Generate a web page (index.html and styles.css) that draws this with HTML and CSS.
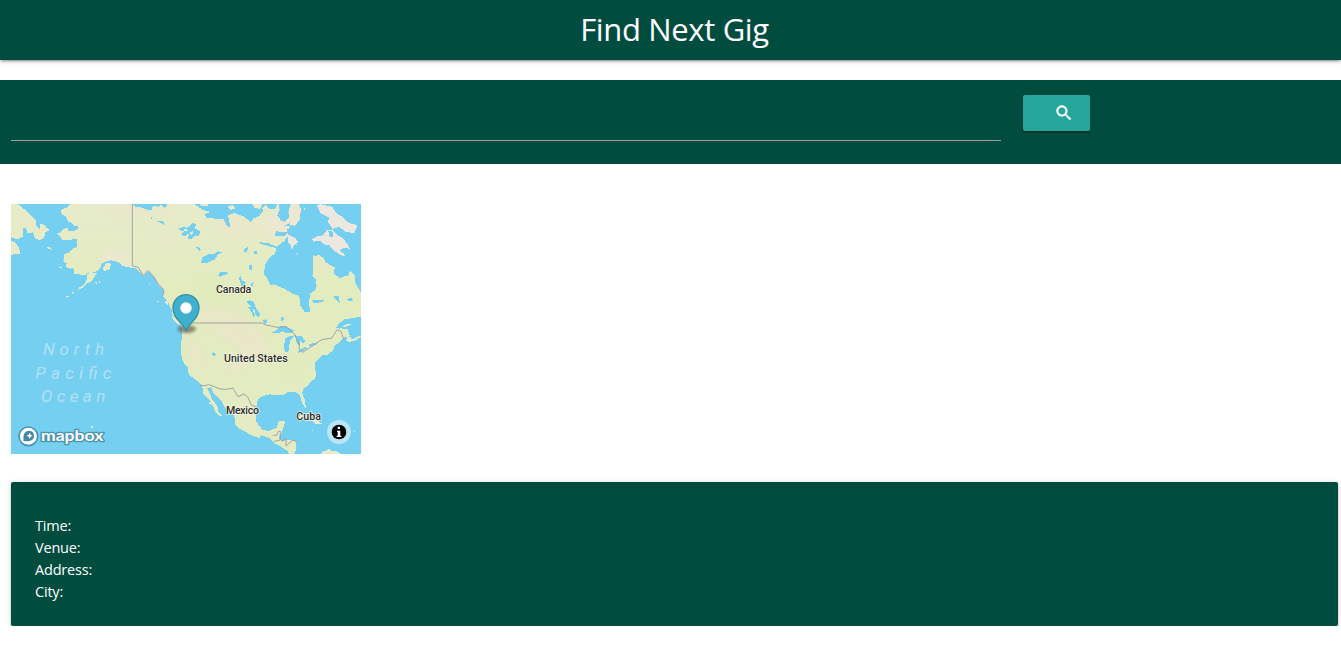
FILE: index.html
```html
<!DOCTYPE html>
<html lang="en">
<head>
<meta charset="utf-8">
<title>Find Next Gig</title>
<link rel="stylesheet" href="styles.css">
</head>
<body>
<header class="navbar"><h1 class="brand">Find Next Gig</h1></header>
<form class="search">
  <input class="search-input" type="text" aria-label="Search">
  <button class="search-button" type="button" aria-label="Find">
    <svg class="search-icon" viewBox="0 0 24 24"><path fill="currentColor" stroke="currentColor" stroke-width=".5" d="M15.5 14h-.79l-.28-.27C15.41 12.59 16 11.11 16 9.500 16 5.910 13.090 3 9.500 3S3 5.910 3 9.500 5.910 16 9.500 16c1.610 0 3.090-.59 4.230-1.570l.27.28v.79l5 4.990L20.490 19l-4.990-5zm-6 0C7.010 14 5 11.990 5 9.500S7.010 5 9.500 5 14 7.010 14 9.500 11.990 14 9.500 14z"/></svg>
  </button>
</form>
<main class="content">
  <svg class="map" viewBox="0 0 1050 750" role="img" aria-label="Map of North America">
    <defs>
      <filter id="soft" x="-40%" y="-40%" width="180%" height="180%"><feGaussianBlur stdDeviation="12"/></filter>
      <filter id="shade" x="-40%" y="-60%" width="180%" height="220%"><feGaussianBlur stdDeviation="5"/></filter>
      <linearGradient id="landFill" x1="0" y1="0" x2="0" y2="1"><stop offset="0" stop-color="#e7ebca"/><stop offset=".35" stop-color="#e3ecbf"/><stop offset="1" stop-color="#e4ebc3"/></linearGradient>
      <clipPath id="landClip"><path id="mainland" d="M180 0L168 10 150 18 152 30 165 38 171 53 181 56 190 66 203 66 198 78 188 81 171 80 169 70 157 76 147 86 138 89 147 96 153 107 180 108 188 103 197 106 197 130 183 135 173 146 160 151 157 172 166 177 178 190 188 195 190 210 222 213 229 208 250 205 265 197 272 180 280 174 300 169 325 175 335 186 360 191 376 193 383 203 396 216 408 205 417 204 430 218 440 240 456 255 459 265 455 276 470 290 475 305 484 320 484 334 502 348 512 370 512 404 510 425 512 464 520 480 530 490 533 510 550 525 564 534 574 550 577 568 590 583 600 592 592 598 605 604 612 622 623 635 633 636 622 622 619 606 602 584 598 570 588 553 600 550 607 565 622 583 634 595 642 612 662 625 671 640 672 662 683 674 705 684 723 695 745 702 751 694 776 702 790 718 804 724 829 741 835 750H849L856 737 853 708 832 707 814 712 802 703 812 687 823 652 803 652 796 672 773 681 754 677 735 652 735 612 741 586 754 576 777 571 790 574 819 572 832 563 850 564 862 569 869 579 872 595 884 614 883 592 874 570 875 556 891 545 896 535 911 524 917 510 912 495 911 475 927 462 934 453 947 454 966 439 970 425 987 414 1000 400 1017 397 1010 375 974 372 985 358 1001 346 1050 338V265L1034 240 1031 214 1018 199 1011 215 997 218 991 224 976 215 969 210 971 190 945 176 939 164 925 152 910 157 905 152 907 188 904 217 913 222 917 245 911 260 896 270 895 305 898 325 882 325 868 305 865 276 843 268 825 257 808 249 788 241 778 243 768 221 760 211 761 184 773 164 793 147 797 128 821 110 833 93 827 76 849 68 866 47 871 17 862 0Z"/></clipPath>
    </defs>
    <rect width="1050" height="750" fill="#75cff0"/>
    <g shape-rendering="crispEdges">
      <use href="#mainland" fill="url(#landFill)"/>
      <path fill="#e8ebc8" d="M0 0H20L48 22 74 48 75 66 88 78 88 61 102 62 106 71 118 78 103 85 99 102 87 109 72 104 66 85 50 88 45 73 37 73 36 97 21 106 0 100ZM0 110L14 116 25 133 27 150 0 152ZM245 205L257 208 241 232 226 239 220 248 201 259 204 251 218 243 229 225 229 210ZM276 190L288 176 300 180 295 196 278 202ZM182 266l13-5-10 9zM165 276h10v3h-10zM144 191l9-3v5h-9zM108 130h7l7 7-9-2zM164 180l14 0 2 14-12-2zM252 236l6-3v7zM261 234l6-2v5zM438 292l6-3v6zM414 240h3v3h-3zM462 290l12 3-4 9-7-5zM482 337l10 2 16 18-5 7-16-15z"/>
      <path fill="#ece7df" d="M903 105L918 97 937 94 947 77 968 80 979 93 993 101 1009 119 1016 134 998 132 985 139 1000 150 1001 157 985 151 966 138 956 124 939 121 927 110 906 113ZM925 0L963 8 978 29 993 38 1006 51 1023 61 1040 62 1030 87 1003 84 985 68 965 75 952 56 953 40 930 29 917 5ZM911 37l15-5 3 18-15 5zM832 92l21 10 13 20 14 3-18 1-10-7-10 18-3-15-9-5zM855 147l10-5 3 8-8 4zM885 155l5-3 2 9zM894 11h4v3h-4z"/>
      <path fill="#e7ecca" d="M1008 398l11 0 3 9 12-6 13-7 3 4-20 13-17 3-7-4zM986 367l20-9 16 3-20 8zM857 640l11-7 25 2 17 9 24 16-22-1-10-14-23-1zM950 666l20-3 31 7 15 9-23 8-33-3zM932 745l22-10 8 6 20 2 8 7h-62zM903 678h4v3h-4zM1029 680h4v3h-4zM240 666h6v5h-6z"/>
    </g>
    <g clip-path="url(#landClip)">
      <g filter="url(#soft)" opacity=".5">
        <path fill="#f4e2df" d="M765 40l115-45 10 55-55 45-65 5zM445 90l35 15-12 18-25-10zM270 140l70 5 25 48-50-7-48 3zM365 165l45 35 65 85-28-15-55-65zM920 160l50 20-28 15z"/>
        <path fill="#efe2cf" d="M585 305l115 30 60 60 30 60-60 20-60-50-90-60-30-40zM290 25L355 0l130 10-95 20-105 0zM620 30l130 30-20 40-100-20zM535 400l40 30 0 60-25-5-18-45zM650 470l75-5-35 45-45-10z"/>
        <path fill="#dcebb5" d="M545 230l60-10 70 65-65 10zM820 480l65-35-20 70-45 5z"/>
      </g>
    </g>
    <g fill="#75cff0" shape-rendering="crispEdges">
      <path d="M365 0H452L444 9 426 5 421 19 404 16 390 10 370 7ZM550 0H800L792 15 777 16 765 3 754 11 756 29 740 39 727 43 720 55 700 38 684 33 672 26 651 34 655 54 659 70 648 67 638 46 618 44 586 42 580 30 598 24 572 16ZM450 0h20l-9 13zM803 0H839L832 26 835 39 822 54 810 50 799 34 806 17ZM871 0H920L917 24 932 41 935 62 926 77 915 93 890 98 880 107 902 118 921 117 934 130 943 130 958 141 972 148 938 152 925 151 907 153 894 162 882 151 867 159 853 144 867 128 854 118 874 114 849 92 860 79 850 68 870 50 866 30 875 20ZM795 82l31 3 15-22 9 3-14 14-15 16-30 0zM820 66l17-10 2 12z"/>
      <path d="M501 75l15-6 13 2 15-14 11 4-4 11 16 10-3 15-11-3-13 12-10-2 5-16-15 9-10-5 9-9zM572 162l14-9 12-4 11 1 12-8 16 2-18 9-7 13-15 6-6 4-20 2zM554 131l7-3 9 7-6 6zM620 216l9-13 14 0 9 6-24 9zM698 135l12-6-1 17-10-3zM683 223l5-7 5 14 11 4-3 14-9-2zM438 53l9-4 12 5 3 10-14-8zM420 36l4 8h-4zM714 183h9v14h-7zM747 114l25 4 23 9-2 5-33-10-13-2zM729 142h10v9h-10zM720 239l8-6-1 12h-7zM705 294l11-5 13 5 5 18 14 18-3 9-10-5-6-20-4 3 8 18-5 4-8-17-10-13 10-1z"/>
      <path d="M903 289l35 0-3 5-27 4zM967 278l15-4 2 11 4 15-10-10zM1008 286l12-6 8 9-15 2zM808 342l7-4 6 8-8 7zM756 350l8-4 6 8-10 5z"/>
      <path d="M780 387l16-8 10-12 20-2 13 11 11 2-9 9-18 0-8-5-14 6zM822 403l17-8 12 3-11 7-4 9-2 26-10 6-5-12zM848 394l24 2 10 15-7 8-7-7-1 17-10-11-2-15zM860 442l20-13 9 3-15 10-13 5zM889 423l31-9-1 6-20 7zM603 448l4-5 8 7-3 8-8-5zM975 370l18-16 16-8h31v8l-20 3-20 6-14 12zM952 80l9 0 6 8-3 12-10-3z"/>
      <path fill="#e9eac9" d="M725 0h30l-8 15-18-4zM745 32l12-10 4 17-10 7zM564 0h28v7h-20zM648 8l18-5 8 9-16 7z"/>
    </g>
    <g fill="#e9eac9" shape-rendering="crispEdges"><path d="M516 77l12-2 4 5-13 2zM535 86l12-6-4 14zM878 12h5v5h-5zM856 305h4v3h-4z"/></g>
    <g fill="none" stroke="#a2a4a7" stroke-width="3">
      <path d="M364 0V186L382 190 396 215 411 199 428 218 440 237 459 258 455 276M520 357H755L762 362 798 370 825 368 850 390 865 420 864 436 875 445 905 425 932 407 963 402 978 377 990 382 999 409M567 544L584 545 592 541 627 555 647 556 666 552 681 578 699 570 711 580 720 602 735 609M785 694h12l5-12h6l0 26-18 4M811 712l14-8 0 22 18-16 15 0"/>
    </g>
    <g class="map-label"><text x="615" y="268" textLength="106">Canada</text><text x="639" y="474" textLength="191">United States</text><text x="645" y="629" textLength="99">Mexico</text><text x="856" y="648" textLength="74">Cuba</text></g>
    <g class="ocean-label"><text x="96" y="454" textLength="183">North</text><text x="73" y="524" textLength="228">Pacific</text><text x="90" y="595" textLength="193">Ocean</text></g>
    <ellipse cx="527" cy="375" rx="28" ry="12" fill="#5c554a" opacity=".65" filter="url(#shade)"/>
    <path d="M525 380C514 353 486 346 486 311a39 39 0 0 1 78 0C564 346 536 353 525 380Z" fill="#3fb1ce" stroke="#348fa7" stroke-width="4"/>
    <circle cx="525" cy="312" r="17" fill="#fff"/>
    <circle cx="52" cy="697" r="28" fill="#fff" stroke="#4d93ad" stroke-width="5"/>
    <path d="M38 711C35 691 41 680 55 680a15 15 0 0 1 14 16c0 14-15 18-31 15Z" fill="#4588a3"/>
    <path d="M56 686l3 6 6 3-6 3-3 6-3-6-6-3 6-3Z" fill="#fff"/>
    <text class="mapbox-label" x="90" y="710" textLength="187" lengthAdjust="spacingAndGlyphs">mapbox</text>
    <circle cx="984" cy="684" r="36" fill="#b9e5f5"/><circle cx="984" cy="684" r="22"/>
    <path d="M980 668h7v7h-7zM978 680h10v15h3v4h-14v-4h3v-11h-2z" fill="#fff"/>
  </svg>
  <section class="card"><p>Time:</p><p>Venue:</p><p>Address:</p><p>City:</p></section>
</main>
</body>
</html>
```
FILE: styles.css
```css
* { box-sizing: border-box; }
body { margin: 0; background: #fff; color: #fff; font-family: "Open Sans", sans-serif; overflow: hidden; }
.navbar { height: 60px; padding-left: 8px; background: #004d40; box-shadow: 0 2px 2px rgba(0,0,0,.14), 0 3px 1px -2px rgba(0,0,0,.12), 0 1px 5px rgba(0,0,0,.2); }
.brand { margin: 0; text-align: center; font-size: 31px; font-weight: 400; line-height: 58px; letter-spacing: -.35px; }
.search { display: flex; align-items: flex-start; gap: 22px; height: 84px; margin-top: 20px; padding: 15px 11px; background: #004d40; }
.search-input { width: 990px; height: 46px; padding: 0; border: 0; border-bottom: 1px solid #9e9e9e; outline: 0; background: transparent; color: #fff; font: 16px "Open Sans", sans-serif; }
.search-button { display: flex; width: 67px; height: 36px; padding: 8px 16px 8px 31px; border: 0; border-radius: 2px; background: #26a69a; color: #fff; box-shadow: 0 2px 2px rgba(0,0,0,.14), 0 3px 1px -2px rgba(0,0,0,.12), 0 1px 5px rgba(0,0,0,.2); }
.search-icon { width: 20px; height: 20px; flex: none; }
.content { padding: 40px 3px 0 11px; }
.map { display: block; width: 350px; height: 250px; }
.map-label { fill: #2d2d2b; stroke: #f4f5e6; stroke-width: 4px; stroke-linejoin: round; paint-order: stroke; font: 500 32px Roboto, sans-serif; }
.ocean-label { fill: #b2e1f6; font: italic 400 51px Roboto, sans-serif; }
.mapbox-label { fill: #fff; stroke: #4d93ad; stroke-width: 8px; stroke-linejoin: round; paint-order: stroke; font: 700 46px Lato, sans-serif; }
.card { height: 144px; margin-top: 28px; padding: 33px 24px 23px; border-radius: 2px; background: #004d40; box-shadow: 0 2px 2px rgba(0,0,0,.14), 0 3px 1px -2px rgba(0,0,0,.12), 0 1px 5px rgba(0,0,0,.2); }
.card p { margin: 0; font-size: 14.5px; line-height: 22px; letter-spacing: -.2px; }
```
